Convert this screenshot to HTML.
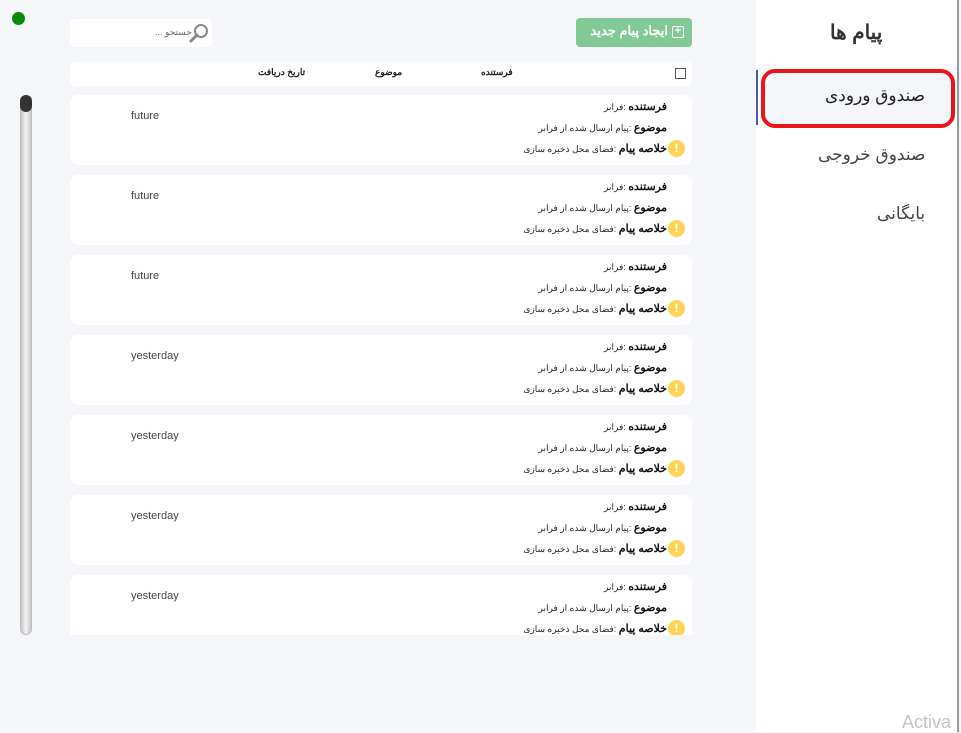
<!DOCTYPE html>
<html><head><meta charset="utf-8"><style>
*{box-sizing:border-box;margin:0;padding:0}
body{width:961px;height:732px;background:#f5f6fa;position:relative;overflow:hidden;font-family:"Liberation Sans","Noto Sans CJK SC",sans-serif;color:#222}
.abs{position:absolute}
.side{left:756px;top:0;width:203px;height:732px;background:#fff;border-right:2px solid #9a9a9a}
.card{position:absolute;left:70px;width:622px;height:70px;background:#fff;border-radius:8px;overflow:hidden}
.l{position:absolute;right:25px;direction:rtl;white-space:nowrap;font-size:9px;color:#222}
.l b{font-size:11px;color:#111}
.ic{position:absolute;left:598px;top:45px;width:17px;height:17px;border-radius:50%;background:#fdd458;color:#fff;font-size:12px;font-weight:bold;text-align:center;line-height:17px}
.d{position:absolute;left:61px;top:15px;font-size:11px;color:#444}
</style></head><body>
<div class="abs" style="left:12px;top:12px;width:13px;height:13px;border-radius:50%;background:#0a8a0a"></div>
<div class="abs" style="left:20px;top:95px;width:12px;height:540px;border-radius:6px;background:linear-gradient(90deg,#c8c8c8,#f2f2f2,#c8c8c8);border:1px solid #bbb"></div>
<div class="abs" style="left:20px;top:95px;width:12px;height:17px;border-radius:6px;background:#333"></div>
<div class="abs" style="left:70px;top:19px;width:142px;height:28px;background:#fff;border-radius:5px"></div>
<div class="abs" style="left:155px;top:27px;font-size:9px;color:#666;direction:rtl">جستجو ...</div>
<svg class="abs" style="left:188px;top:22px" width="22" height="22" viewBox="0 0 22 22"><circle cx="13" cy="9" r="6" fill="none" stroke="#888" stroke-width="2"/><line x1="9" y1="13" x2="3" y2="19" stroke="#888" stroke-width="3" stroke-linecap="round"/></svg>
<div class="abs" style="left:576px;top:18px;width:116px;height:29px;background:#82c995;border-radius:4px;color:#fff;font-size:13px;font-weight:bold;direction:rtl;padding:5px 8px 0 0;white-space:nowrap"><span style="display:inline-block;width:12px;height:12px;border:1.5px solid #fff;border-radius:2px;font-size:11px;line-height:9px;text-align:center;vertical-align:middle;margin-left:4px">+</span>ایجاد پیام جدید</div>
<div class="abs" style="left:70px;top:62px;width:622px;height:24px;background:#fff;border-radius:5px"></div>
<div class="abs" style="left:675px;top:68px;width:11px;height:11px;border:1px solid #555"></div>
<div class="abs" style="left:481px;top:67px;font-size:9px;font-weight:bold">فرستنده</div>
<div class="abs" style="left:375px;top:67px;font-size:9px;font-weight:bold">موضوع</div>
<div class="abs" style="left:258px;top:67px;font-size:9px;font-weight:bold">تاریخ دریافت</div>

<div class="card" style="top:95px"><div class="l" style="top:5px"><b>فرستنده</b> :فرابر</div><div class="l" style="top:26px"><b>موضوع</b> :پیام ارسال شده از فرابر</div><div class="l" style="top:47px"><b>خلاصه پیام</b> :فضای محل ذخیره سازی</div><div class="ic">!</div><div class="d">future</div></div>
<div class="card" style="top:175px"><div class="l" style="top:5px"><b>فرستنده</b> :فرابر</div><div class="l" style="top:26px"><b>موضوع</b> :پیام ارسال شده از فرابر</div><div class="l" style="top:47px"><b>خلاصه پیام</b> :فضای محل ذخیره سازی</div><div class="ic">!</div><div class="d">future</div></div>
<div class="card" style="top:255px"><div class="l" style="top:5px"><b>فرستنده</b> :فرابر</div><div class="l" style="top:26px"><b>موضوع</b> :پیام ارسال شده از فرابر</div><div class="l" style="top:47px"><b>خلاصه پیام</b> :فضای محل ذخیره سازی</div><div class="ic">!</div><div class="d">future</div></div>
<div class="card" style="top:335px"><div class="l" style="top:5px"><b>فرستنده</b> :فرابر</div><div class="l" style="top:26px"><b>موضوع</b> :پیام ارسال شده از فرابر</div><div class="l" style="top:47px"><b>خلاصه پیام</b> :فضای محل ذخیره سازی</div><div class="ic">!</div><div class="d">yesterday</div></div>
<div class="card" style="top:415px"><div class="l" style="top:5px"><b>فرستنده</b> :فرابر</div><div class="l" style="top:26px"><b>موضوع</b> :پیام ارسال شده از فرابر</div><div class="l" style="top:47px"><b>خلاصه پیام</b> :فضای محل ذخیره سازی</div><div class="ic">!</div><div class="d">yesterday</div></div>
<div class="card" style="top:495px"><div class="l" style="top:5px"><b>فرستنده</b> :فرابر</div><div class="l" style="top:26px"><b>موضوع</b> :پیام ارسال شده از فرابر</div><div class="l" style="top:47px"><b>خلاصه پیام</b> :فضای محل ذخیره سازی</div><div class="ic">!</div><div class="d">yesterday</div></div>
<div class="card" style="top:575px;height:60px;border-radius:8px 8px 0 0"><div class="l" style="top:5px"><b>فرستنده</b> :فرابر</div><div class="l" style="top:26px"><b>موضوع</b> :پیام ارسال شده از فرابر</div><div class="l" style="top:47px"><b>خلاصه پیام</b> :فضای محل ذخیره سازی</div><div class="ic">!</div><div class="d">yesterday</div></div>

<div class="abs side"></div>
<div class="abs" style="left:756px;top:70px;width:2px;height:55px;background:#4a5bb5"></div>
<div class="abs" style="left:830px;top:20px;font-size:20px;font-weight:bold;color:#333;direction:rtl">پیام ها</div>
<div class="abs" style="left:761px;top:69px;width:194px;height:59px;border:4px solid #e8141e;border-radius:14px;background:#f5f6fa"></div>
<div class="abs" style="left:825px;top:86px;font-size:17px;color:#222;direction:rtl">صندوق ورودی</div>
<div class="abs" style="left:818px;top:145px;font-size:17px;color:#444;direction:rtl">صندوق خروجی</div>
<div class="abs" style="left:877px;top:204px;font-size:17px;color:#444;direction:rtl">بایگانی</div>
<div class="abs" style="left:902px;top:712px;font-size:18px;color:#c4c4c4">Activa</div>
</body></html>
